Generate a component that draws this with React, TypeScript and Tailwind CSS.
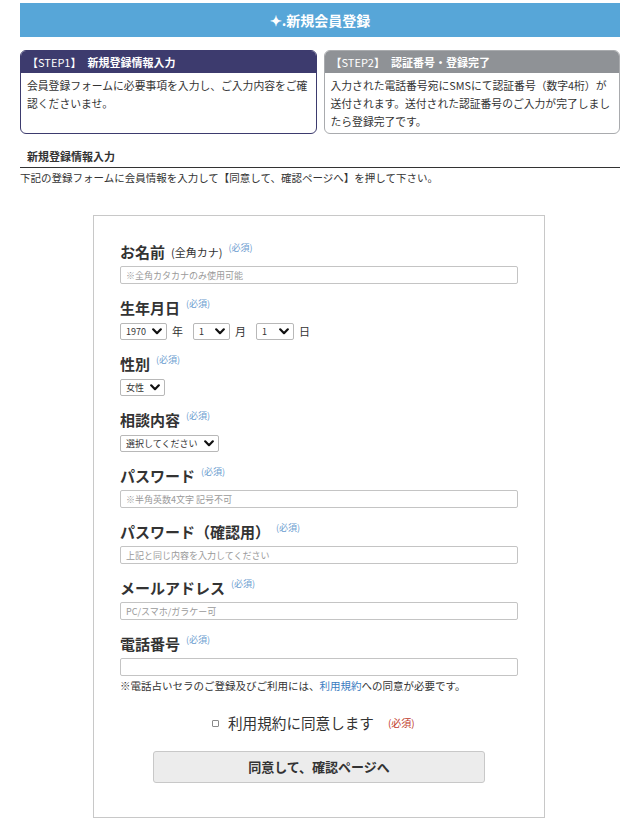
import React from "react";

const Req = () => (
  <span className="ml-[6px] self-start mt-[3px] text-[9px] leading-[9px] font-normal text-[#6b9ccf]">(必須)</span>
);

const Chevron = () => (
  <svg width="10" height="7" viewBox="0 0 10 7" className="shrink-0">
    <path d="M1.2 1.3 L5 5.2 L8.8 1.3" fill="none" stroke="#111" strokeWidth="2.2" strokeLinecap="round" strokeLinejoin="round" />
  </svg>
);

const Select = ({ text, w }: { text: string; w: string }) => (
  <div className={`${w} h-[17px] border border-[#b8b8b8] rounded-[2px] bg-white flex items-center justify-between pl-[5px] pr-[4px]`}>
    <span className="text-[9px] leading-none text-[#333] whitespace-nowrap">{text}</span>
    <Chevron />
  </div>
);

const Input = ({ ph }: { ph?: string }) => (
  <div className="w-full h-[18px] border border-[#c4c4c4] rounded-[2px] bg-white flex items-center px-[5px]">
    <span className="text-[9px] leading-none text-[#9a9a9a] whitespace-nowrap">{ph}</span>
  </div>
);

const Label = ({ children, extra }: { children: React.ReactNode; extra?: React.ReactNode }) => (
  <div className="h-[24px] flex items-center">
    <span className="text-[15px] font-bold leading-[24px] text-[#333] whitespace-nowrap">{children}</span>
    {extra}
    <Req />
  </div>
);

export default function App() {
  return (
    <div className="w-[642px] min-h-[836px] bg-white font-['Noto_Sans_CJK_JP','Noto_Sans',sans-serif] text-[#333]">
      <div className="w-[600px] ml-[20px] pt-[3px]">
        <div className="h-[34px] bg-[#57a6d8] flex items-center justify-center">
          <span className="text-white text-[14px] font-bold leading-none">✦.新規会員登録</span>
        </div>

        <div className="mt-[13px] grid grid-cols-2 gap-[7px]">
          <div className="border border-[#3d3b6e] rounded-[6px] overflow-hidden flex flex-col">
            <div className="h-[22px] bg-[#3d3b6e] flex items-center px-[6px] text-white text-[11px] leading-none whitespace-nowrap">
              <span>【STEP1】</span>
              <span className="ml-[6px] font-bold">新規登録情報入力</span>
            </div>
            <div className="px-[6px] pt-[3px] pb-[3px] text-[10.8px] leading-[18px] text-[#333] whitespace-nowrap">
              会員登録フォームに必要事項を入力し、ご入力内容をご確
              <br />
              認くださいませ。
            </div>
          </div>
          <div className="border border-[#a9abae] rounded-[6px] overflow-hidden flex flex-col">
            <div className="h-[22px] bg-[#8f9296] flex items-center px-[6px] text-white text-[11px] leading-none whitespace-nowrap">
              <span>【STEP2】</span>
              <span className="ml-[6px] font-bold">認証番号・登録完了</span>
            </div>
            <div className="px-[6px] pt-[3px] pb-[3px] text-[10.8px] leading-[18px] text-[#333] whitespace-nowrap">
              入力された電話番号宛にSMSにて認証番号（数字4桁）が
              <br />
              送付されます。送付された認証番号のご入力が完了しまし
              <br />
              たら登録完了です。
            </div>
          </div>
        </div>

        <div className="mt-[14px] border-b border-[#333] pb-[3px] px-[7px]">
          <span className="text-[11px] font-bold leading-[16px] block">新規登録情報入力</span>
        </div>
        <div className="mt-[2px] text-[10.5px] leading-[16px] whitespace-nowrap">
          下記の登録フォームに会員情報を入力して【同意して、確認ページへ】を押して下さい。
        </div>

        <div className="mt-[29px] ml-[73px] w-[452px] border border-[#c8c8c8] pt-[24px] pb-[34px] px-[26px]">
          <div className="mb-[12px]">
            <Label
              extra={
                <span className="ml-[6px] text-[11px] font-normal leading-none text-[#333] whitespace-nowrap">(全角カナ)</span>
              }
            >
              お名前
            </Label>
            <div className="mt-[2px]">
              <Input ph="※全角カタカナのみ使用可能" />
            </div>
          </div>

          <div className="mb-[12px]">
            <Label>生年月日</Label>
            <div className="mt-[2px] h-[18px] flex items-center">
              <Select text="1970" w="w-[47px]" />
              <span className="ml-[5px] text-[11px] leading-none">年</span>
              <div className="ml-[10px]">
                <Select text="1" w="w-[37px]" />
              </div>
              <span className="ml-[5px] text-[11px] leading-none">月</span>
              <div className="ml-[10px]">
                <Select text="1" w="w-[38px]" />
              </div>
              <span className="ml-[5px] text-[11px] leading-none">日</span>
            </div>
          </div>

          <div className="mb-[12px]">
            <Label>性別</Label>
            <div className="mt-[2px] h-[18px] flex items-center">
              <Select text="女性" w="w-[45px]" />
            </div>
          </div>

          <div className="mb-[12px]">
            <Label>相談内容</Label>
            <div className="mt-[2px] h-[18px] flex items-center">
              <Select text="選択してください" w="w-[99px]" />
            </div>
          </div>

          <div className="mb-[12px]">
            <Label>パスワード</Label>
            <div className="mt-[2px]">
              <Input ph="※半角英数4文字 記号不可" />
            </div>
          </div>

          <div className="mb-[12px]">
            <Label>パスワード（確認用）</Label>
            <div className="mt-[2px]">
              <Input ph="上記と同じ内容を入力してください" />
            </div>
          </div>

          <div className="mb-[12px]">
            <Label>メールアドレス</Label>
            <div className="mt-[2px]">
              <Input ph="PC/スマホ/ガラケー可" />
            </div>
          </div>

          <div>
            <Label>電話番号</Label>
            <div className="mt-[2px]">
              <Input />
            </div>
            <div className="mt-[2px] text-[10.5px] leading-[16px] whitespace-nowrap">
              ※電話占いセラのご登録及びご利用には、<span className="text-[#3a7bbf]">利用規約</span>への同意が必要です。
            </div>
          </div>

          <div className="mt-[19px] h-[20px] flex items-center pl-[92px]">
            <span className="w-[7px] h-[7px] border border-[#8a8a8a] rounded-[1px] bg-white" />
            <span className="ml-[9px] text-[14.6px] leading-none text-[#333] whitespace-nowrap">利用規約に同意します</span>
            <span className="ml-[14px] text-[10px] leading-none text-[#c0392b] whitespace-nowrap">(必須)</span>
          </div>

          <button className="mt-[18px] mx-auto block w-[332px] h-[32px] bg-[#ececec] border border-[#c8c8c8] rounded-[3px] text-[13px] font-bold text-[#333]">
            同意して、確認ページへ
          </button>
        </div>
      </div>
    </div>
  );
}
